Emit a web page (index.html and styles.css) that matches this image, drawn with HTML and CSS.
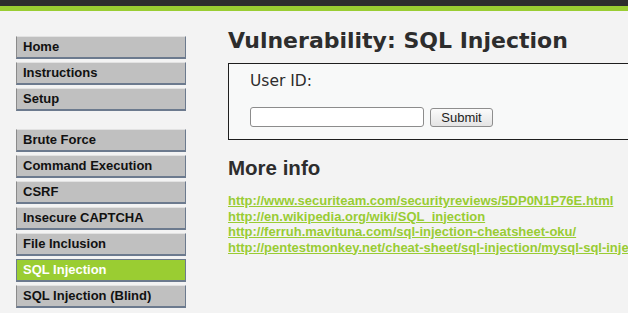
FILE: index.html
```
<!DOCTYPE html>
<html>
<head>
<meta charset="utf-8">
<link rel="stylesheet" href="styles.css">
</head>
<body>
<div class="header"></div>
<div class="layout">
  <nav class="menu">
    <ul class="menu-group">
      <li><a class="menu-item">Home</a></li>
      <li><a class="menu-item">Instructions</a></li>
      <li><a class="menu-item">Setup</a></li>
    </ul>
    <ul class="menu-group">
      <li><a class="menu-item">Brute Force</a></li>
      <li><a class="menu-item">Command Execution</a></li>
      <li><a class="menu-item">CSRF</a></li>
      <li><a class="menu-item">Insecure CAPTCHA</a></li>
      <li><a class="menu-item">File Inclusion</a></li>
      <li><a class="menu-item selected">SQL Injection</a></li>
      <li><a class="menu-item">SQL Injection (Blind)</a></li>
    </ul>
  </nav>
  <main class="main">
    <h1 class="title">Vulnerability: SQL Injection</h1>
    <div class="vuln-box">
      <p class="label">User ID:</p>
      <form class="form-row">
        <input class="text-input" type="text">
        <button class="submit-btn" type="button">Submit</button>
      </form>
    </div>
    <h2 class="subtitle">More info</h2>
    <ul class="links">
      <li><a class="link" href="#">http://www.securiteam.com/securityreviews/5DP0N1P76E.html</a></li>
      <li><a class="link" href="#">http://en.wikipedia.org/wiki/SQL_injection</a></li>
      <li><a class="link" href="#">http://ferruh.mavituna.com/sql-injection-cheatsheet-oku/</a></li>
      <li><a class="link" href="#">http://pentestmonkey.net/cheat-sheet/sql-injection/mysql-sql-injection-cheat-sheet</a></li>
    </ul>
  </main>
</div>
</body>
</html>
```
FILE: styles.css
```
html, body {
  margin: 0;
  padding: 0;
}
body {
  background: #f3f3f3;
  font-family: "Liberation Sans", Arial, sans-serif;
  color: #2d2d2d;
  overflow: hidden;
  width: 628px;
  height: 313px;
}
.header {
  height: 6px;
  background: #2d2d2d;
  border-bottom: 5px solid #9acd32;
}
.layout {
  display: flex;
  align-items: flex-start;
  padding-left: 16px;
}
.menu {
  width: 170px;
  flex: none;
  padding-top: 25px;
}
.menu-group {
  list-style: none;
  margin: 0 0 18px 0;
  padding: 0;
}
.menu-group li {
  margin-bottom: 3px;
}
.menu-item {
  display: block;
  height: 20px;
  line-height: 20px;
  padding-left: 6px;
  background: #c0c0c0;
  border-top: 1px solid #e2e2e2;
  border-left: 1px solid #8a8a8a;
  border-right: 1px solid #6c7a8e;
  border-bottom: 2px solid #6c7a8e;
  font-size: 13px;
  font-weight: bold;
  color: #111;
  white-space: nowrap;
}
.menu-item.selected {
  background: #9acd32;
  color: #fff;
  border-top-color: #6c7a8e;
  border-left-color: #6c7a8e;
}
.main {
  margin-left: 42px;
  padding-top: 17px;
  flex: 1;
  min-width: 0;
}
.title {
  margin: 0;
  font-family: "DejaVu Sans", sans-serif;
  font-size: 22px;
  line-height: 26px;
  font-weight: bold;
  color: #2d2d2d;
  white-space: nowrap;
}
.vuln-box {
  margin-top: 9px;
  width: 398px;
  background: #f8f9f9;
  border: 1px solid #1e1e1e;
  padding: 8px 0 12px 21px;
}
.label {
  margin: 0;
  font-family: "DejaVu Sans", sans-serif;
  font-size: 15.5px;
  line-height: 18px;
  color: #2d2d2d;
}
.form-row {
  display: flex;
  align-items: center;
  gap: 6px;
  margin-top: 17px;
}
.text-input {
  box-sizing: border-box;
  width: 174px;
  height: 20px;
  margin: 0;
  padding: 0 3px;
  border: 1px solid #8c8c8c;
  border-radius: 3px;
  background: #fff;
}
.submit-btn {
  box-sizing: border-box;
  width: 63px;
  height: 19px;
  margin: 0;
  padding: 0;
  border: 1px solid #8e8e8e;
  border-radius: 3px;
  background: linear-gradient(#fbfbfb, #e4e4e4);
  font-family: "Liberation Sans", Arial, sans-serif;
  font-size: 13px;
  color: #222;
}
.subtitle {
  margin: 16px 0 0 0;
  font-family: "Liberation Sans", Arial, sans-serif;
  font-size: 20.5px;
  line-height: 24px;
  font-weight: bold;
  color: #2d2d2d;
}
.links {
  list-style: none;
  margin: 13px 0 0 0;
  padding: 0;
  white-space: nowrap;
}
.links li {
  line-height: 14.5px;
}
.link {
  font-size: 13px;
  font-weight: bold;
  color: #99cc33;
  text-decoration: underline;
}
```
